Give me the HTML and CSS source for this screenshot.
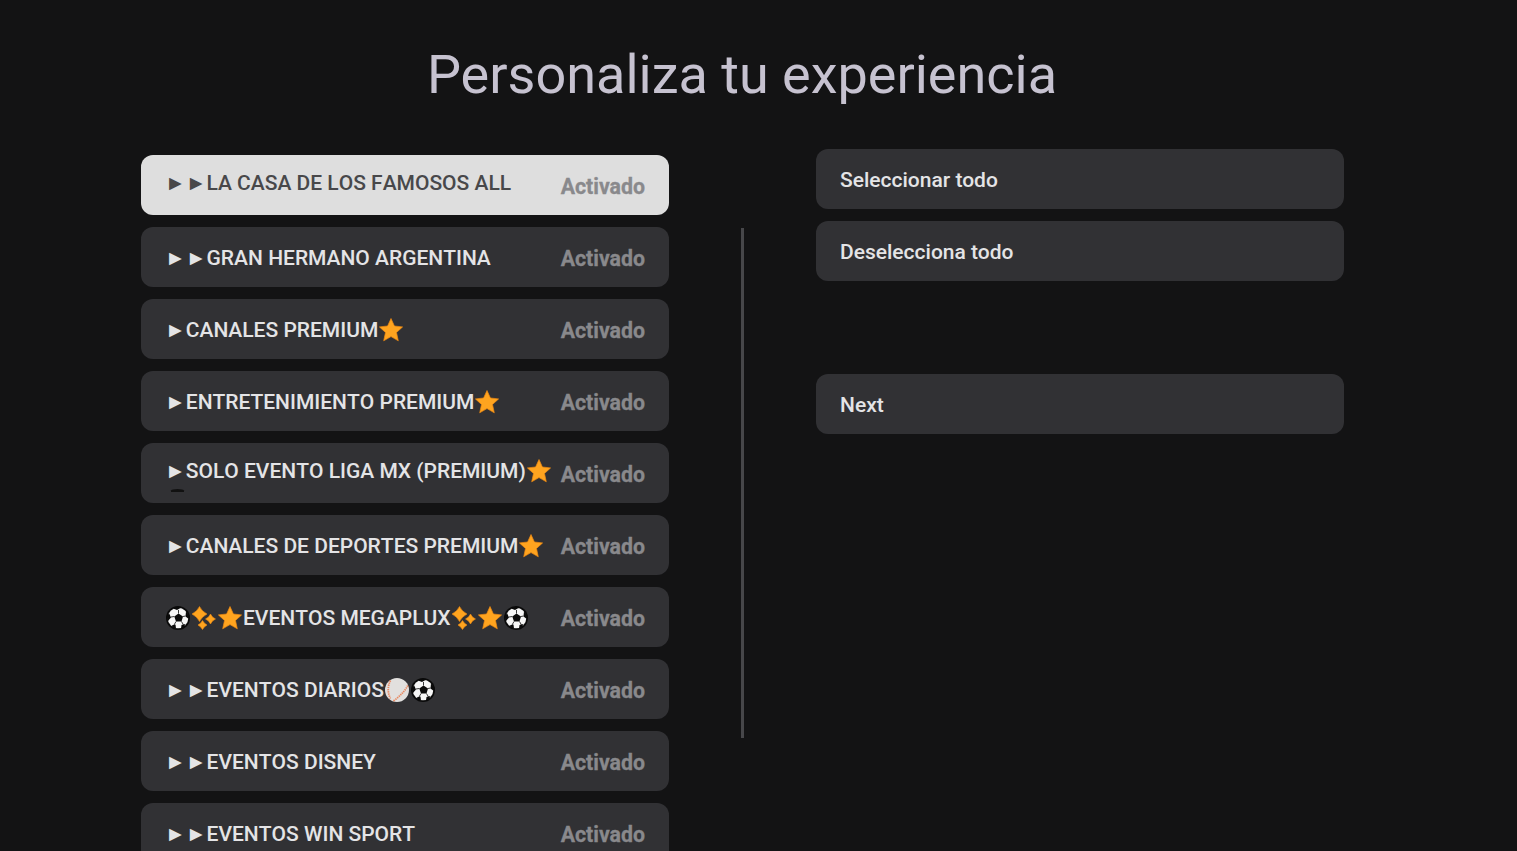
FILE: index.html
```html
<!DOCTYPE html>
<html lang="es">
<head>
    <meta charset="utf-8" />
    <title>Personaliza tu experiencia</title>
    <link rel="stylesheet" href="styles.css">
</head>
<body>
    <svg class="icon-defs" width="0" height="0" aria-hidden="true">
        <symbol id="star" viewBox="0 0 24 24">
            <path d="M12 .5 15.4 8 23.600 8.900 17.500 14.500 19.300 22.800 12 18.600 4.700 22.800 6.500 14.500.4 8.900 8.600 8Z" fill="#ffa41f" stroke="#ef8a12" stroke-width=".7" stroke-linejoin="round"/>
        </symbol>
        <symbol id="sparkles" viewBox="0 0 24 24">
            <path d="M7.500.5Q10 5.500 15 8 10 10.500 7.500 15.500 5 10.500 0 8 5 5.500 7.500.5Z" fill="#ffa41f" stroke="#ef8a12" stroke-width=".6" stroke-linejoin="round"/>
            <path d="M18.500 8Q20 11.500 23.500 13 20 14.500 18.500 18 17 14.500 13.500 13 17 11.500 18.500 8Z" fill="#ffa41f" stroke="#ef8a12" stroke-width=".6" stroke-linejoin="round"/>
            <path d="M10.500 14.500Q12 17.500 15 19 12 20.500 10.500 23.500 9 20.500 6 19 9 17.500 10.500 14.500Z" fill="#ffa41f" stroke="#ef8a12" stroke-width=".6" stroke-linejoin="round"/>
        </symbol>
        <symbol id="soccer" viewBox="0 0 24 24">
            <circle cx="12" cy="12" r="12" fill="#0a0a0a"/>
            <circle cx="12" cy="12" r="10.300" fill="#f6f6f6"/>
            <path d="M12.500 7.500 17 10.500 15.500 15.500H10L8.300 10.500Z" fill="#0a0a0a"/>
            <path d="M7 2.500 11 4 14.500 2 12 .5ZM20 5.500 19.500 10.500 22.800 13 23.500 9ZM3 7 5 11.500 2 15 .5 11ZM5.500 19.500 9.500 18.500 10 22.500 7 22ZM19.500 18 15.500 19 15 22.500 18 21.500Z" fill="#0a0a0a"/>
            <path d="M12.500 7.500 12.500 4M17 10.500 19.500 10M15.500 15.500 17.500 19M10 15.500 8 19M8.300 10.500 5 11" stroke="#0a0a0a" stroke-width=".8" fill="none"/>
        </symbol>
        <symbol id="baseball" viewBox="0 0 24 24">
            <circle cx="12" cy="12" r="12" fill="#e2e0de"/>
            <path d="M5.500 2.500C2.500 8 2.500 15 5.500 20.500M22.800 7.500C20 13 15 18 8.500 23" fill="none" stroke="#e98a62" stroke-width="1.800" stroke-dasharray="1.400 .8"/>
        </symbol>
    </svg>

    <div class="screen">
        <h1 class="page-title">Personaliza tu experiencia</h1>
        <div class="columns">
            <ul class="package-list">
                <li class="package-row is-focused">
                    <span class="package-name">►►LA CASA DE LOS FAMOSOS ALL</span>
                    <span class="package-state">Activado</span>
                </li>
                <li class="package-row">
                    <span class="package-name">►►GRAN HERMANO ARGENTINA</span>
                    <span class="package-state">Activado</span>
                </li>
                <li class="package-row">
                    <span class="package-name">►CANALES PREMIUM<svg class="emoji"><use href="#star"/></svg></span>
                    <span class="package-state">Activado</span>
                </li>
                <li class="package-row">
                    <span class="package-name">►ENTRETENIMIENTO PREMIUM<svg class="emoji"><use href="#star"/></svg></span>
                    <span class="package-state">Activado</span>
                </li>
                <li class="package-row is-wrapped">
                    <span class="package-name">►SOLO EVENTO LIGA MX (PREMIUM)<svg class="emoji"><use href="#star"/></svg><span class="wrapped-tip"></span></span>
                    <span class="package-state">Activado</span>
                </li>
                <li class="package-row">
                    <span class="package-name">►CANALES DE DEPORTES PREMIUM<svg class="emoji"><use href="#star"/></svg></span>
                    <span class="package-state">Activado</span>
                </li>
                <li class="package-row">
                    <span class="package-name"><svg class="emoji"><use href="#soccer"/></svg><svg class="emoji"><use href="#sparkles"/></svg><svg class="emoji"><use href="#star"/></svg>EVENTOS MEGAPLUX<svg class="emoji"><use href="#sparkles"/></svg><svg class="emoji"><use href="#star"/></svg><svg class="emoji"><use href="#soccer"/></svg></span>
                    <span class="package-state">Activado</span>
                </li>
                <li class="package-row">
                    <span class="package-name">►►EVENTOS DIARIOS<svg class="emoji"><use href="#baseball"/></svg><svg class="emoji"><use href="#soccer"/></svg></span>
                    <span class="package-state">Activado</span>
                </li>
                <li class="package-row">
                    <span class="package-name">►►EVENTOS DISNEY</span>
                    <span class="package-state">Activado</span>
                </li>
                <li class="package-row">
                    <span class="package-name">►►EVENTOS WIN SPORT</span>
                    <span class="package-state">Activado</span>
                </li>
            </ul>
            <div class="divider"></div>
            <div class="actions">
                <button class="action-btn">Seleccionar todo</button>
                <button class="action-btn">Deselecciona todo</button>
                <button class="action-btn next-btn">Next</button>
            </div>
        </div>
    </div>
</body>
</html>
```

FILE: styles.css
```css
html, body {
    margin: 0;
    height: 100%;
    overflow: hidden;
}

body {
    background-color: #131314;
    font-family: Roboto, "Liberation Sans", sans-serif;
}

.icon-defs {
    display: block;
    height: 0;
}

.screen {
    height: 851px;
    overflow: hidden;
}

.page-title {
    margin: 0;
    padding: 41px 33px 0 0;
    height: 155px;
    box-sizing: border-box;
    text-align: center;
    font-size: 54px;
    line-height: 67px;
    font-weight: 400;
    color: #c6c2d0;
}

.columns {
    display: flex;
    align-items: flex-start;
    padding-left: 141px;
}

.package-list {
    list-style: none;
    margin: 0;
    padding: 0;
    width: 528px;
    display: flex;
    flex-direction: column;
    gap: 12px;
    flex-shrink: 0;
}

.package-row {
    height: 60px;
    box-sizing: border-box;
    padding: 2px 24px 0;
    display: flex;
    align-items: center;
    justify-content: space-between;
    background-color: #313134;
    border-radius: 12px;
    font-size: 21px;
    font-weight: 500;
    color: #e4e4e6;
    overflow: hidden;
}

.package-row.is-focused {
    background-color: #dedede;
    color: #48484a;
}

.package-name {
    position: relative;
    white-space: nowrap;
    font-kerning: none;
}

.package-row.is-focused .package-name,
.package-row.is-wrapped .package-name {
    margin-top: -6px;
}

/* top edge of the emoji that wrapped onto a clipped second line */
.wrapped-tip {
    position: absolute;
    left: 6px;
    top: 30px;
    width: 13px;
    height: 3px;
    border-radius: 50% 50% 0 0;
    background-color: #111;
}

.package-state {
    flex-shrink: 0;
    font-size: 21.3px;
    font-weight: 700;
    color: #89898c;
    -webkit-text-stroke: 0.3px #89898c;
}

.emoji {
    width: 26px;
    height: 24px;
    vertical-align: -5px;
}

.divider {
    width: 3px;
    height: 510px;
    margin: 73px 0 0 72px;
    background-color: #47474a;
    flex-shrink: 0;
}

.actions {
    width: 528px;
    margin: -6px 0 0 72px;
    display: flex;
    flex-direction: column;
    gap: 12px;
    flex-shrink: 0;
}

.action-btn {
    height: 60px;
    padding: 2px 24px 0;
    border: none;
    border-radius: 12px;
    background-color: #313134;
    color: #e4e4e6;
    font-family: inherit;
    font-size: 21px;
    font-weight: 500;
    text-align: left;
}

.next-btn {
    margin-top: 81px;
}
```
